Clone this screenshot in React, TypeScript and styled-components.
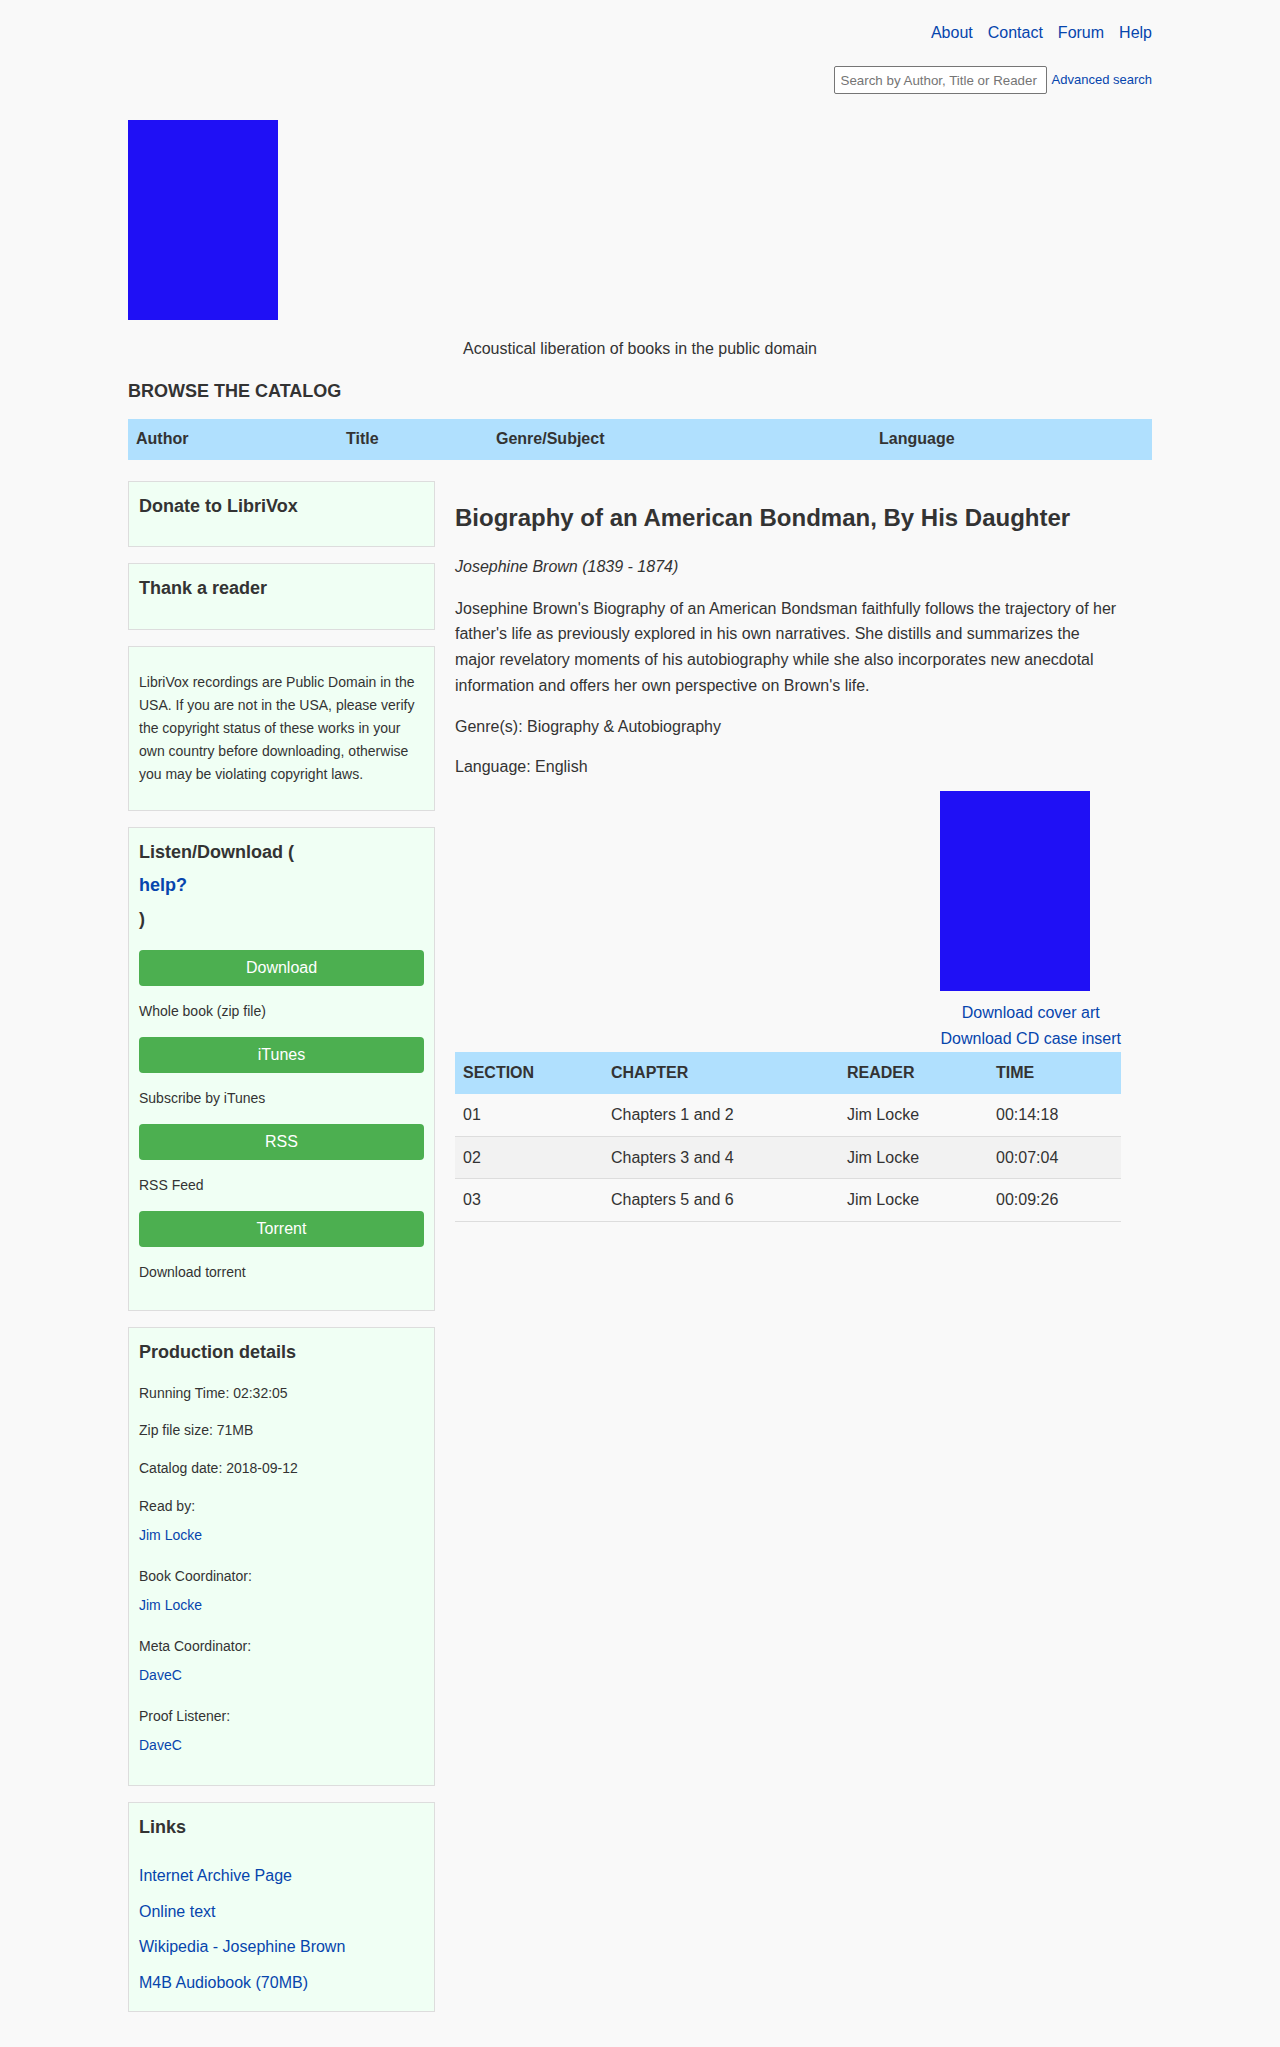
import React from "react";
import styled, { createGlobalStyle } from "styled-components";

const GlobalStyle = createGlobalStyle`
  * { box-sizing: border-box; }
  html, body { margin: 0; padding: 0; background: #f9f9f9; }
  body {
    font-family: "Liberation Sans", Arial, Helvetica, sans-serif;
    color: #333;
  }
  a { color: #0645ad; text-decoration: none; }
`;

const Page = styled.div`
  width: 1024px;
  margin: 0 auto;
  padding-bottom: 36px;
`;

const Nav = styled.nav`
  display: flex;
  justify-content: flex-end;
  gap: 15px;
  padding-top: 23px;
  font-size: 16px;
  line-height: 19px;
`;

const SearchRow = styled.form`
  display: flex;
  justify-content: flex-end;
  align-items: center;
  gap: 5px;
  margin: 24px 0 0;
`;

const SearchInput = styled.input`
  width: 213px;
  height: 28px;
  padding: 0 6px;
  border: 1px solid #767676;
  border-radius: 2px;
  background: #fff;
  font-family: "Liberation Sans", Arial, sans-serif;
  font-size: 13.33px;
  color: #333;
  &::placeholder { color: #757575; }
`;

const AdvancedLink = styled.a`
  font-size: 13px;
  line-height: 16px;
`;

const Logo = styled.div`
  width: 150px;
  height: 200px;
  margin-top: 26px;
  background: #1f10f5;
`;

const Tagline = styled.p`
  margin: 19px 0 0;
  text-align: center;
  font-size: 16px;
  line-height: 19px;
`;

const BrowseTitle = styled.h2`
  margin: 23px 0 16.5px;
  font-size: 18px;
  line-height: 21px;
  font-weight: bold;
  text-transform: uppercase;
`;

const CatalogBar = styled.div`
  display: grid;
  grid-template-columns: 210px 150px 383px 1fr;
  align-items: center;
  height: 41px;
  background: #b0e0fe;
  font-size: 16px;
  font-weight: bold;
`;

const CatalogCell = styled.span`
  padding-left: 8px;
`;

const Columns = styled.div`
  display: flex;
  align-items: flex-start;
  gap: 20px;
  margin-top: 21px;
`;

const Sidebar = styled.aside`
  flex: none;
  width: 307px;
  display: flex;
  flex-direction: column;
  gap: 16px;
`;

const Box = styled.section<{ $extraBottom?: number }>`
  background: #f0fff4;
  border: 1px solid #ddd;
  padding: 10px 10px ${(p) => 10 + (p.$extraBottom ?? 0)}px;
  font-size: 14px;
`;

const BoxTitle = styled.h3`
  margin: 3px 0 19px;
  font-size: 18px;
  line-height: 22px;
  font-weight: bold;
`;

const ListenTitle = styled.h3`
  display: flex;
  flex-direction: column;
  gap: 11.5px;
  margin: 3px 0 20px;
  font-size: 18px;
  line-height: 22px;
  font-weight: bold;
`;

const HelpLink = styled.a`
  font-weight: bold;
`;

const BoxText = styled.p`
  margin: 14px 0;
  line-height: 23px;
`;

const GreenButton = styled.a`
  display: flex;
  align-items: center;
  justify-content: center;
  height: 36px;
  background: #4caf50;
  color: #fff;
  border-radius: 4px;
  font-size: 16px;
`;

const Caption = styled.p`
  margin: 14px 0;
  line-height: 23px;
`;

const DetailLine = styled.p`
  margin: 14px 0;
  line-height: 23.8px;
`;

const CreditLabel = styled.p`
  margin: 14px 0 0;
  line-height: 23.8px;
`;

const CreditLink = styled.a`
  display: block;
  margin: 6px 0 20.3px;
  line-height: 20px;
`;

const LinkList = styled.div`
  display: flex;
  flex-direction: column;
  gap: 13.5px;
  padding: 8px 0 7px;
  font-size: 16px;
  line-height: 22px;
`;

const Main = styled.main`
  flex: none;
  width: 666px;
`;

const BookTitle = styled.h1`
  margin: 23px 0 22px;
  font-size: 24px;
  line-height: 28.8px;
  font-weight: bold;
`;

const Text = styled.p<{ $italic?: boolean }>`
  margin: 16px 0;
  font-size: 16px;
  line-height: 25.6px;
  font-style: ${(p) => (p.$italic ? "italic" : "normal")};
`;

const MetaLine = styled(Text)`
  margin: 14.5px 0;
`;

const LanguageLine = styled(MetaLine)`
  margin-bottom: 11px;
`;

const CoverBlock = styled.div`
  width: fit-content;
  margin-left: auto;
  text-align: center;
  font-size: 16px;
  line-height: 25.6px;
`;

const CoverImage = styled.div`
  width: 150px;
  height: 200px;
  margin-bottom: 9px;
  background: #1f10f5;
`;

const CoverLink = styled.a`
  display: block;
`;

const Sections = styled.table`
  width: 666px;
  margin-top: 1px;
  border-collapse: collapse;
  table-layout: fixed;
  font-size: 16px;
`;

const Th = styled.th`
  padding: 8px;
  background: #b0e0fe;
  text-align: left;
  font-weight: bold;
  text-transform: uppercase;
  line-height: 26px;
`;

const Row = styled.tr<{ $shaded?: boolean }>`
  background: ${(p) => (p.$shaded ? "#f2f2f2" : "transparent")};
`;

const Td = styled.td`
  padding: 8px;
  border-bottom: 1px solid #ddd;
  line-height: 25.6px;
`;

const sections = [
  { n: "01", ch: "Chapters 1 and 2", r: "Jim Locke", t: "00:14:18" },
  { n: "02", ch: "Chapters 3 and 4", r: "Jim Locke", t: "00:07:04" },
  { n: "03", ch: "Chapters 5 and 6", r: "Jim Locke", t: "00:09:26" },
];

const downloads = [
  { label: "Download", caption: "Whole book (zip file)" },
  { label: "iTunes", caption: "Subscribe by iTunes" },
  { label: "RSS", caption: "RSS Feed" },
  { label: "Torrent", caption: "Download torrent" },
];

const credits = [
  { role: "Read by:", who: "Jim Locke" },
  { role: "Book Coordinator:", who: "Jim Locke" },
  { role: "Meta Coordinator:", who: "DaveC" },
  { role: "Proof Listener:", who: "DaveC" },
];

export default function App() {
  return (
    <>
      <GlobalStyle />
      <Page>
        <header>
          <Nav>
            <a href="#">About</a>
            <a href="#">Contact</a>
            <a href="#">Forum</a>
            <a href="#">Help</a>
          </Nav>
          <SearchRow onSubmit={(e) => e.preventDefault()}>
            <SearchInput placeholder="Search by Author, Title or Reader" />
            <AdvancedLink href="#">Advanced search</AdvancedLink>
          </SearchRow>
          <Logo />
          <Tagline>Acoustical liberation of books in the public domain</Tagline>
        </header>

        <BrowseTitle>Browse the catalog</BrowseTitle>
        <CatalogBar>
          <CatalogCell>Author</CatalogCell>
          <CatalogCell>Title</CatalogCell>
          <CatalogCell>Genre/Subject</CatalogCell>
          <CatalogCell>Language</CatalogCell>
        </CatalogBar>

        <Columns>
          <Sidebar>
            <Box>
              <BoxTitle>Donate to LibriVox</BoxTitle>
            </Box>
            <Box $extraBottom={1}>
              <BoxTitle>Thank a reader</BoxTitle>
            </Box>
            <Box>
              <BoxText>
                LibriVox recordings are Public Domain in the USA. If you are not in the USA,
                please verify the copyright status of these works in your own country before
                downloading, otherwise you may be violating copyright laws.
              </BoxText>
            </Box>
            <Box $extraBottom={2}>
              <ListenTitle>
                <span>Listen/Download (</span>
                <HelpLink href="#">help?</HelpLink>
                <span>)</span>
              </ListenTitle>
              {downloads.map((d) => (
                <React.Fragment key={d.label}>
                  <GreenButton href="#">{d.label}</GreenButton>
                  <Caption>{d.caption}</Caption>
                </React.Fragment>
              ))}
            </Box>
            <Box>
              <BoxTitle>Production details</BoxTitle>
              <DetailLine>Running Time: 02:32:05</DetailLine>
              <DetailLine>Zip file size: 71MB</DetailLine>
              <DetailLine>Catalog date: 2018-09-12</DetailLine>
              {credits.map((c) => (
                <React.Fragment key={c.role}>
                  <CreditLabel>{c.role}</CreditLabel>
                  <CreditLink href="#">{c.who}</CreditLink>
                </React.Fragment>
              ))}
            </Box>
            <Box>
              <BoxTitle>Links</BoxTitle>
              <LinkList>
                <a href="#">Internet Archive Page</a>
                <a href="#">Online text</a>
                <a href="#">Wikipedia - Josephine Brown</a>
                <a href="#">M4B Audiobook (70MB)</a>
              </LinkList>
            </Box>
          </Sidebar>

          <Main>
            <BookTitle>Biography of an American Bondman, By His Daughter</BookTitle>
            <Text $italic>Josephine Brown (1839 - 1874)</Text>
            <Text>
              Josephine Brown's Biography of an American Bondsman faithfully follows the
              trajectory of her father's life as previously explored in his own narratives. She
              distills and summarizes the major revelatory moments of his autobiography while
              she also incorporates new anecdotal information and offers her own perspective on
              Brown's life.
            </Text>
            <MetaLine>Genre(s): Biography &amp; Autobiography</MetaLine>
            <LanguageLine>Language: English</LanguageLine>
            <CoverBlock>
              <CoverImage />
              <CoverLink href="#">Download cover art</CoverLink>
              <CoverLink href="#">Download CD case insert</CoverLink>
            </CoverBlock>
            <Sections>
              <colgroup>
                <col style={{ width: 148 }} />
                <col style={{ width: 236 }} />
                <col style={{ width: 149 }} />
                <col style={{ width: 133 }} />
              </colgroup>
              <thead>
                <tr>
                  <Th>Section</Th>
                  <Th>Chapter</Th>
                  <Th>Reader</Th>
                  <Th>Time</Th>
                </tr>
              </thead>
              <tbody>
                {sections.map((s, i) => (
                  <Row key={s.n} $shaded={i % 2 === 1}>
                    <Td>{s.n}</Td>
                    <Td>{s.ch}</Td>
                    <Td>{s.r}</Td>
                    <Td>{s.t}</Td>
                  </Row>
                ))}
              </tbody>
            </Sections>
          </Main>
        </Columns>
      </Page>
    </>
  );
}
